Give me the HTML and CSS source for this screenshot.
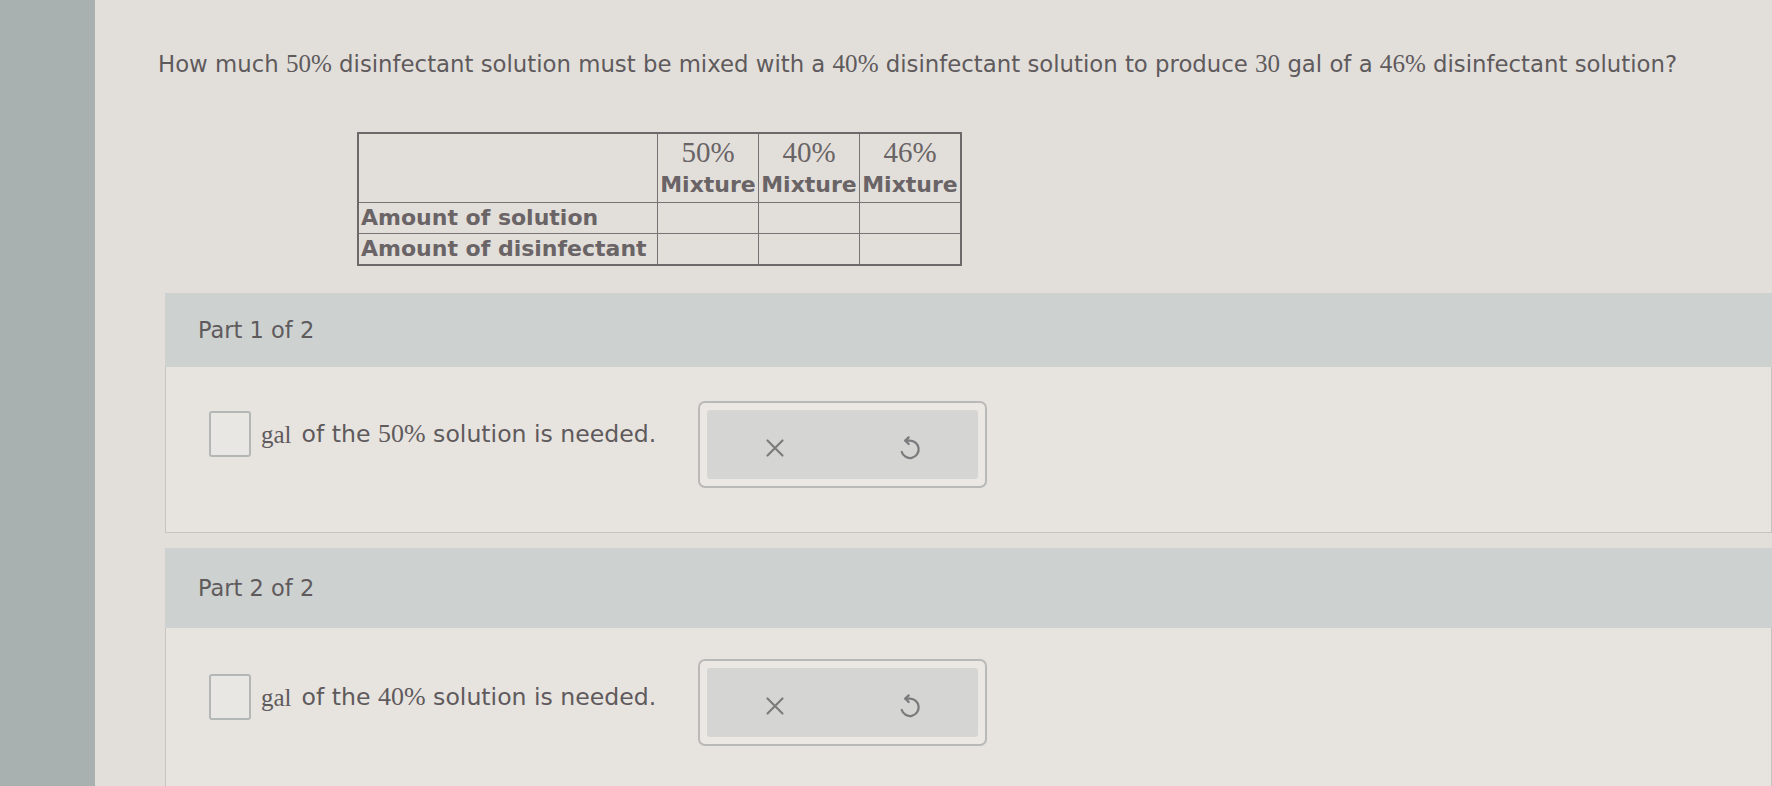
FILE: index.html
```html
<!DOCTYPE html>
<html lang="en">

<head>
    <meta charset="UTF-8">
    <meta name="viewport" content="width=device-width, initial-scale=1.0">
    <title>Mixture problem</title>
    <link rel="stylesheet" href="styles.css">
</head>

<body>
<div class="strip"></div>
<div class="main">
    <p class="question">How much <span class="num">50%</span> disinfectant solution must be mixed with a <span class="num">40%</span> disinfectant solution to produce <span class="num">30</span> gal of a <span class="num">46%</span> disinfectant solution?</p>

    <table class="mix-table">
        <tr class="head">
            <td class="label"></td>
            <td><span class="num">50%</span><br>Mixture</td>
            <td><span class="num">40%</span><br>Mixture</td>
            <td><span class="num">46%</span><br>Mixture</td>
        </tr>
        <tr>
            <td class="label">Amount of solution</td>
            <td></td>
            <td></td>
            <td></td>
        </tr>
        <tr>
            <td class="label">Amount of disinfectant</td>
            <td></td>
            <td></td>
            <td></td>
        </tr>
    </table>

    <div class="part">
        <div class="part-head">Part 1 of 2</div>
        <div class="part-body">
            <div class="answer">
                <div class="answer-box"></div>
                <span class="num unit">gal</span>
                <span>of the <span class="num">50%</span> solution is needed.</span>
            </div>
            <div class="tools">
                <div class="tools-inner">
                    <svg class="icon" viewBox="0 0 24 24"><path d="M6 6 L18 18 M18 6 L6 18"/></svg>
                    <svg class="icon undo" viewBox="0 0 24 24"><path d="M8.5 6.5 L12 6.5 A6.5 6.5 0 1 1 5.8 15"/><path d="M11 4 L8.5 6.5 L11 9"/></svg>
                </div>
            </div>
        </div>
    </div>

    <div class="part second">
        <div class="part-head">Part 2 of 2</div>
        <div class="part-body">
            <div class="answer">
                <div class="answer-box"></div>
                <span class="num unit">gal</span>
                <span>of the <span class="num">40%</span> solution is needed.</span>
            </div>
            <div class="tools">
                <div class="tools-inner">
                    <svg class="icon" viewBox="0 0 24 24"><path d="M6 6 L18 18 M18 6 L6 18"/></svg>
                    <svg class="icon undo" viewBox="0 0 24 24"><path d="M8.5 6.5 L12 6.5 A6.5 6.5 0 1 1 5.8 15"/><path d="M11 4 L8.5 6.5 L11 9"/></svg>
                </div>
            </div>
        </div>
    </div>
</div>
</body>

</html>
```

FILE: styles.css
```css
body {
    display: flex;
    margin: 0;
    height: 786px;
    overflow: hidden;
    font-family: "DejaVu Sans", Verdana, sans-serif;
    color: #5f5a5c;
    background-color: #e2dfdb;
}

.strip {
    width: 95px;
    flex-shrink: 0;
    background-color: #a9b0b0;
}

.main {
    flex: 1;
    min-width: 0;
}

.num {
    font-family: "Liberation Serif", "Times New Roman", serif;
    font-size: 1.1em;
}

.question {
    margin: 49px 0 0 63px;
    font-size: 22.8px;
    line-height: 30px;
    white-space: nowrap;
}

.mix-table {
    margin: 53px 0 0 262px;
    border-collapse: collapse;
    border: 2px solid #6d6869;
    font-weight: bold;
    font-size: 22px;
    color: #6a6466;
}

.mix-table td {
    border: 1px solid #777274;
    width: 96px;
    height: 30px;
    padding: 0 2px;
    line-height: 28px;
    white-space: nowrap;
}

.mix-table .head td {
    height: 68px;
    text-align: center;
    line-height: 30px;
}

.mix-table .head .num {
    font-weight: normal;
    font-size: 29px;
}

.mix-table td.label {
    width: 294px;
    text-align: left;
}

.part {
    margin: 27px 0 0 70px;
}

.part.second {
    margin-top: 15px;
}

.part-head {
    height: 74px;
    display: flex;
    align-items: center;
    padding-left: 33px;
    font-size: 22.5px;
    background-color: #cdd1d0;
}

.second .part-head {
    height: 80px;
}

.part-body {
    display: flex;
    align-items: flex-start;
    height: 166px;
    padding: 34px 0 0 43px;
    box-sizing: border-box;
    border: 1px solid #c6c4c1;
    border-top: none;
    background-color: #e7e4e0;
}

.second .part-body {
    padding-top: 31px;
}

.second .answer {
    margin-top: 15px;
}

.answer {
    display: flex;
    align-items: center;
    gap: 10px;
    margin-top: 10px;
    font-size: 23.6px;
}

.answer-box {
    width: 38px;
    height: 42px;
    border: 2px solid #b3b7b6;
    border-radius: 3px;
    background-color: #e9e7e3;
}

.unit {
    font-size: 25px;
    margin-top: 2px;
}

.tools {
    margin-left: 42px;
    width: 289px;
    height: 87px;
    box-sizing: border-box;
    padding: 7px;
    border: 2px solid #b9b9b8;
    border-radius: 7px;
    background-color: #ebe8e4;
}

.tools-inner {
    height: 100%;
    display: flex;
    justify-content: space-around;
    align-items: center;
    padding-top: 6px;
    box-sizing: border-box;
    border-radius: 3px;
    background-color: #d5d5d3;
}

.icon {
    width: 30px;
    height: 30px;
    fill: none;
    stroke: #7b7b7d;
    stroke-width: 1.7;
    stroke-linecap: round;
    stroke-linejoin: round;
}

.undo {
    width: 32px;
    height: 32px;
}
```
